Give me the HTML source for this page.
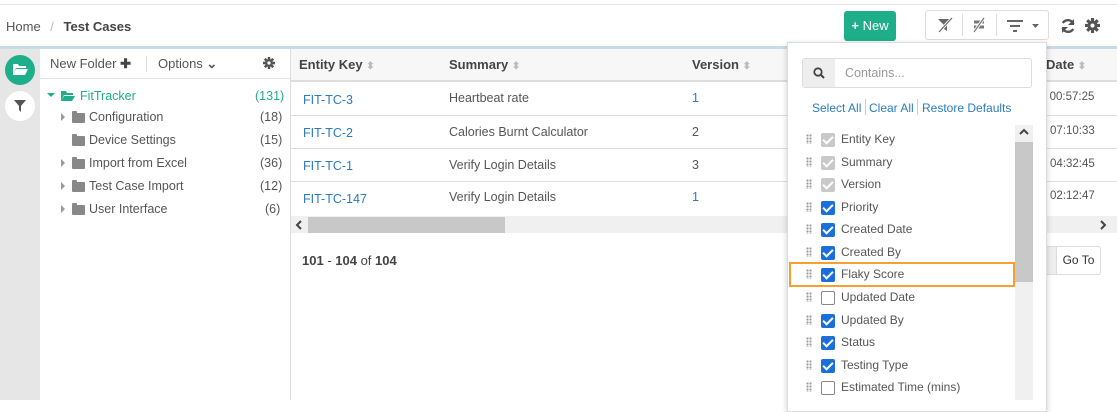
<!DOCTYPE html>
<html><head><meta charset="utf-8"><style>
*{box-sizing:border-box;margin:0;padding:0}
body{width:1117px;height:400px;overflow:hidden;background:#fff;font-family:"Liberation Sans",sans-serif;font-size:12.5px;color:#555;position:relative}
.abs{position:absolute}
.lnk{color:#2a7bc0}
.row{position:absolute;left:291px;width:826px;height:33px;border-bottom:1px solid #ddd}
.row span{position:absolute;top:10px}
.tree div{position:absolute;font-size:12.5px;color:#555}
.it{position:absolute;left:806px;font-size:12px;color:#555}
.cb{position:absolute;left:821px;width:14px;height:14px;border-radius:2px;background:#1a6fd8}
.cb.g{background:#c9c9c9}
.cb.e{background:#fff;border:1.5px solid #888}
.cb:not(.e)::after{content:"";position:absolute;left:4px;top:1px;width:4px;height:8px;border:solid #fff;border-width:0 2px 2px 0;transform:rotate(45deg)}
.dots{position:absolute;left:806px;width:6px;height:10px;background:radial-gradient(circle,#999 1px,transparent 1.2px) 0 0/3px 3px}
.fd{position:absolute;width:13px;height:10px;background:#888;border-radius:1px}
.fd::before{content:"";position:absolute;left:0;top:-2px;width:5px;height:3px;background:#888;border-radius:1px 1px 0 0}
.tri{position:absolute;width:0;height:0;border-left:4px solid #999;border-top:4px solid transparent;border-bottom:4px solid transparent}
</style></head><body>
<div class="abs" style="left:0;top:4px;width:1117px;height:1px;background:#e5e5e5"></div>
<div class="abs" style="left:6px;top:19px;font-size:13px;color:#555">Home <span style="color:#bbb;margin:0 6px">/</span> <b style="color:#444">Test Cases</b></div>
<div class="abs" style="left:844px;top:11px;width:52px;height:30px;background:#1fae8a;border-radius:3px;color:#fff;font-size:13px;line-height:30px;text-align:center"><b>+</b> New</div>
<div class="abs" style="left:925px;top:10px;width:124px;height:30px;border:1px solid #ddd;border-radius:3px"></div>
<div class="abs" style="left:962px;top:14px;width:1px;height:22px;background:#ddd"></div>
<div class="abs" style="left:996px;top:14px;width:1px;height:22px;background:#ddd"></div>
<svg class="abs" style="left:936px;top:17px" width="18" height="16"><path d="M2 2h14l-5 6v6l-3-2V8z" fill="#666"/><path d="M3 15L16 1" stroke="#fff" stroke-width="3"/><path d="M3 15L16 1" stroke="#666" stroke-width="1.2"/></svg>
<svg class="abs" style="left:971px;top:17px" width="16" height="16"><path d="M3 5h10M3 10h10" stroke="#777" stroke-width="3"/><path d="M3 15L13 1" stroke="#fff" stroke-width="3"/><path d="M3 15L13 1" stroke="#777" stroke-width="1.2"/></svg>
<svg class="abs" style="left:1006px;top:19px" width="34" height="14"><path d="M1 2h16M4 7h10M7 12h4" stroke="#666" stroke-width="2"/><path d="M26 5h7l-3.5 4z" fill="#666"/></svg>
<svg class="abs" style="left:1060px;top:18px" width="16" height="16" viewBox="0 0 16 16"><path d="M13.5 6A6 6 0 0 0 2.8 5" stroke="#555" stroke-width="2.4" fill="none"/><path d="M14 1v6H8z" fill="#555"/><path d="M2.5 10A6 6 0 0 0 13.2 11" stroke="#555" stroke-width="2.4" fill="none"/><path d="M2 15V9h6z" fill="#555"/></svg>
<svg class="abs" style="left:1085px;top:18px" width="15" height="15" viewBox="0 0 16 16"><g fill="#555"><circle cx="8" cy="8" r="5.2"/><rect x="6.3" y="0" width="3.4" height="16" rx=".5"/><rect x="6.3" y="0" width="3.4" height="16" rx=".5" transform="rotate(45 8 8)"/><rect x="6.3" y="0" width="3.4" height="16" rx=".5" transform="rotate(90 8 8)"/><rect x="6.3" y="0" width="3.4" height="16" rx=".5" transform="rotate(135 8 8)"/></g><circle cx="8" cy="8" r="2.2" fill="#fff"/></svg>
<div class="abs" style="left:0;top:46px;width:1117px;height:3px;background:#c9dbe6"></div>
<div class="abs" style="left:0;top:49px;width:40px;height:351px;background:#e6e6e6"></div>
<div class="abs" style="left:5px;top:55px;width:30px;height:30px;border-radius:50%;background:#1fae8a"></div>
<svg class="abs" style="left:12px;top:63px" width="16" height="13"><path d="M1 1h5l1 2h7v2H4L1 12z M4 6h12l-3 6H1z" fill="#fff"/></svg>
<div class="abs" style="left:5px;top:91px;width:30px;height:30px;border-radius:50%;background:#fff"></div>
<svg class="abs" style="left:14px;top:100px" width="12" height="12"><path d="M0 0h12L7 6v6L5 10V6z" fill="#555"/></svg>
<div class="abs" style="left:290px;top:49px;width:1px;height:351px;background:#ddd"></div>
<div class="abs" style="left:40px;top:78px;width:250px;height:1px;background:#e5e5e5"></div>
<div class="abs" style="left:50px;top:56px;font-size:13px">New Folder <b style="color:#444">✚</b></div>
<div class="abs" style="left:146px;top:56px;width:1px;height:16px;background:#ddd"></div>
<div class="abs" style="left:158px;top:56px;font-size:13px">Options <b>⌄</b></div>
<svg class="abs" style="left:263px;top:57px" width="12" height="12" viewBox="0 0 16 16"><g fill="#555"><circle cx="8" cy="8" r="5.2"/><rect x="6.3" y="0" width="3.4" height="16"/><rect x="6.3" y="0" width="3.4" height="16" transform="rotate(45 8 8)"/><rect x="6.3" y="0" width="3.4" height="16" transform="rotate(90 8 8)"/><rect x="6.3" y="0" width="3.4" height="16" transform="rotate(135 8 8)"/></g><circle cx="8" cy="8" r="2.2" fill="#fff"/></svg>
<div class="tree">
<div style="left:47px;top:93px;width:0;height:0;border-top:4px solid #1fae8a;border-left:4px solid transparent;border-right:4px solid transparent"></div>
<svg class="abs" style="left:60px;top:90px" width="16" height="12"><path d="M1 1h5l1 2h6v2H4L1 11z M4 6h11l-3 5H1z" fill="#1fae8a"/></svg>
<div style="left:80px;top:89px;color:#1fae8a">FitTracker</div><div style="left:255px;top:89px;color:#1fae8a">(131)</div>
<div class="tri" style="left:61px;top:113px"></div><div class="fd" style="left:72px;top:113px"></div><div style="left:89px;top:110px">Configuration</div><div style="left:260px;top:110px">(18)</div>
<div class="fd" style="left:72px;top:136px"></div><div style="left:89px;top:133px">Device Settings</div><div style="left:260px;top:133px">(15)</div>
<div class="tri" style="left:61px;top:159px"></div><div class="fd" style="left:72px;top:159px"></div><div style="left:89px;top:156px">Import from Excel</div><div style="left:260px;top:156px">(36)</div>
<div class="tri" style="left:61px;top:182px"></div><div class="fd" style="left:72px;top:182px"></div><div style="left:89px;top:179px">Test Case Import</div><div style="left:260px;top:179px">(12)</div>
<div class="tri" style="left:61px;top:205px"></div><div class="fd" style="left:72px;top:205px"></div><div style="left:89px;top:202px">User Interface</div><div style="left:265px;top:202px">(6)</div>
</div>
<div class="abs" style="left:291px;top:49px;width:826px;height:33px;background:#f7f7f7;border-bottom:2px solid #ddd"></div>
<div class="abs" style="left:299px;top:57px;font-weight:bold;color:#444;font-size:13px">Entity Key <span style="color:#bbb;font-size:10px">⬍</span></div>
<div class="abs" style="left:449px;top:57px;font-weight:bold;color:#444;font-size:13px">Summary <span style="color:#bbb;font-size:10px">⬍</span></div>
<div class="abs" style="left:692px;top:57px;font-weight:bold;color:#444;font-size:13px">Version <span style="color:#bbb;font-size:10px">⬍</span></div>
<div class="abs" style="left:1046px;top:57px;font-weight:bold;color:#444;font-size:13px">Date <span style="color:#bbb;font-size:10px">⬍</span></div>
<div class="row" style="top:83px"><span class="lnk" style="left:12px">FIT-TC-3</span><span style="left:158px;top:8px">Heartbeat rate</span><span style="left:401px;top:8px" class="lnk">1</span><span style="left:749px;top:8px;font-size:11.5px">0 00:57:25</span></div>
<div class="row" style="top:116px"><span class="lnk" style="left:12px">FIT-TC-2</span><span style="left:158px;top:9px">Calories Burnt Calculator</span><span style="left:401px;top:9px">2</span><span style="left:752px;top:9px;font-size:11.5px">· 07:10:33</span></div>
<div class="row" style="top:149px"><span class="lnk" style="left:12px">FIT-TC-1</span><span style="left:158px;top:9px">Verify Login Details</span><span style="left:401px;top:9px">3</span><span style="left:752px;top:9px;font-size:11.5px">· 04:32:45</span></div>
<div class="row" style="top:182px;border:0"><span class="lnk" style="left:12px">FIT-TC-147</span><span style="left:158px;top:8px">Verify Login Details</span><span style="left:401px;top:8px" class="lnk">1</span><span style="left:752px;top:8px;font-size:11.5px">· 02:12:47</span></div>
<div class="abs" style="left:291px;top:216px;width:826px;height:17px;background:#f0f0f0"></div>
<div class="abs" style="left:308px;top:217px;width:197px;height:16px;background:#c8c8c8"></div>
<svg class="abs" style="left:295px;top:220px" width="8" height="10"><path d="M6 1L2 5l4 4" stroke="#444" stroke-width="2" fill="none"/></svg>
<svg class="abs" style="left:1099px;top:220px" width="8" height="10"><path d="M2 1l4 4-4 4" stroke="#444" stroke-width="2" fill="none"/></svg>
<div class="abs" style="left:302px;top:253px;font-size:13px;color:#444"><b>101</b> - <b>104</b> of <b>104</b></div>
<div class="abs" style="left:1040px;top:246px;width:20px;height:29px;background:#eee;border:1px solid #ddd"></div>
<div class="abs" style="left:1056px;top:246px;width:45px;height:29px;border:1px solid #ddd;border-radius:0 3px 3px 0;font-size:12px;line-height:27px;text-align:center;color:#333;background:#fff">Go To</div>
<div class="abs" style="left:787px;top:42px;width:260px;height:370px;background:#fff;border:1px solid #ddd;box-shadow:0 2px 6px rgba(0,0,0,.2)"></div>
<div class="abs" style="left:802px;top:58px;width:230px;height:30px;border:1px solid #ddd;border-radius:3px"></div>
<div class="abs" style="left:803px;top:59px;width:32px;height:28px;background:#eee"></div>
<svg class="abs" style="left:813px;top:67px" width="12" height="12"><circle cx="5" cy="5" r="3.7" stroke="#444" stroke-width="1.8" fill="none"/><path d="M8 8l3 3" stroke="#444" stroke-width="2"/></svg>
<div class="abs" style="left:845px;top:66px;color:#999;font-size:12.5px">Contains...</div>
<div class="abs lnk" style="left:812px;top:101px;font-size:12px">Select All</div>
<div class="abs" style="left:865px;top:99px;width:1px;height:16px;background:#ccc"></div>
<div class="abs lnk" style="left:869px;top:101px;font-size:12px">Clear All</div>
<div class="abs" style="left:917px;top:99px;width:1px;height:16px;background:#ccc"></div>
<div class="abs lnk" style="left:922px;top:101px;font-size:12px">Restore Defaults</div>
<div class="abs" style="left:1015px;top:125px;width:18px;height:275px;background:#f0f0f0"></div>
<div class="abs" style="left:1015px;top:142px;width:18px;height:140px;background:#c8c8c8"></div>
<svg class="abs" style="left:1019px;top:128px" width="10" height="8"><path d="M1 6l4-4 4 4" stroke="#444" stroke-width="2" fill="none"/></svg>
<div class="abs" style="left:789px;top:262px;width:226px;height:25px;border:2px solid #f5a030"></div>
<div class="dots" style="top:134px"></div><div class="cb g" style="top:133px"></div><div class="it" style="left:841px;top:132px">Entity Key</div>
<div class="dots" style="top:157px"></div><div class="cb g" style="top:156px"></div><div class="it" style="left:841px;top:155px">Summary</div>
<div class="dots" style="top:179px"></div><div class="cb g" style="top:178px"></div><div class="it" style="left:841px;top:177px">Version</div>
<div class="dots" style="top:202px"></div><div class="cb" style="top:201px"></div><div class="it" style="left:841px;top:200px">Priority</div>
<div class="dots" style="top:224px"></div><div class="cb" style="top:223px"></div><div class="it" style="left:841px;top:222px">Created Date</div>
<div class="dots" style="top:247px"></div><div class="cb" style="top:246px"></div><div class="it" style="left:841px;top:245px">Created By</div>
<div class="dots" style="top:269px"></div><div class="cb" style="top:268px"></div><div class="it" style="left:841px;top:267px">Flaky Score</div>
<div class="dots" style="top:292px"></div><div class="cb e" style="top:291px"></div><div class="it" style="left:841px;top:290px">Updated Date</div>
<div class="dots" style="top:315px"></div><div class="cb" style="top:314px"></div><div class="it" style="left:841px;top:313px">Updated By</div>
<div class="dots" style="top:337px"></div><div class="cb" style="top:336px"></div><div class="it" style="left:841px;top:335px">Status</div>
<div class="dots" style="top:360px"></div><div class="cb" style="top:359px"></div><div class="it" style="left:841px;top:358px">Testing Type</div>
<div class="dots" style="top:382px"></div><div class="cb e" style="top:381px"></div><div class="it" style="left:841px;top:380px">Estimated Time (mins)</div>
</body></html>
